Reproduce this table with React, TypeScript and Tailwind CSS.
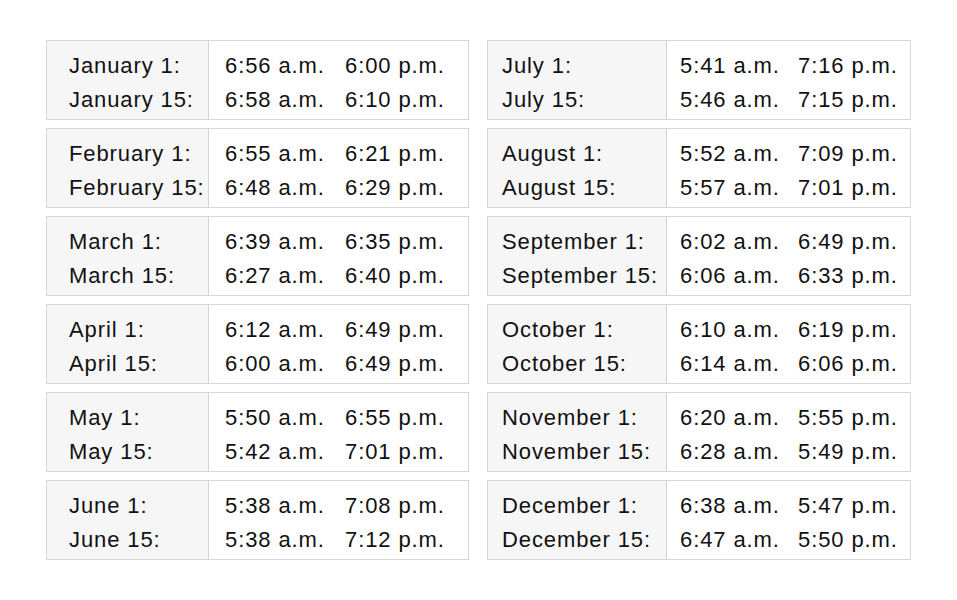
type Entry = {
  first: string;
  rows: [string, string][];
};

const left: Entry[] = [
  { first: 'January', rows: [['6:56 a.m.', '6:00 p.m.'], ['6:58 a.m.', '6:10 p.m.']] },
  { first: 'February', rows: [['6:55 a.m.', '6:21 p.m.'], ['6:48 a.m.', '6:29 p.m.']] },
  { first: 'March', rows: [['6:39 a.m.', '6:35 p.m.'], ['6:27 a.m.', '6:40 p.m.']] },
  { first: 'April', rows: [['6:12 a.m.', '6:49 p.m.'], ['6:00 a.m.', '6:49 p.m.']] },
  { first: 'May', rows: [['5:50 a.m.', '6:55 p.m.'], ['5:42 a.m.', '7:01 p.m.']] },
  { first: 'June', rows: [['5:38 a.m.', '7:08 p.m.'], ['5:38 a.m.', '7:12 p.m.']] },
];

const right: Entry[] = [
  { first: 'July', rows: [['5:41 a.m.', '7:16 p.m.'], ['5:46 a.m.', '7:15 p.m.']] },
  { first: 'August', rows: [['5:52 a.m.', '7:09 p.m.'], ['5:57 a.m.', '7:01 p.m.']] },
  { first: 'September', rows: [['6:02 a.m.', '6:49 p.m.'], ['6:06 a.m.', '6:33 p.m.']] },
  { first: 'October', rows: [['6:10 a.m.', '6:19 p.m.'], ['6:14 a.m.', '6:06 p.m.']] },
  { first: 'November', rows: [['6:20 a.m.', '5:55 p.m.'], ['6:28 a.m.', '5:49 p.m.']] },
  { first: 'December', rows: [['6:38 a.m.', '5:47 p.m.'], ['6:47 a.m.', '5:50 p.m.']] },
];

function MonthTable({ entry, side }: { entry: Entry; side: 'left' | 'right' }) {
  const isLeft = side === 'left';
  return (
    <div
      className={[
        'flex h-[80px] border border-[#d6d6d6]',
        isLeft ? 'w-[423px]' : 'w-[424px]',
      ].join(' ')}
    >
      <div
        className={[
          'flex flex-col border-r border-[#d6d6d6] bg-[#f6f6f6] pt-[8px]',
          isLeft ? 'w-[162px] pl-[22px]' : 'w-[179px] pl-[14px]',
        ].join(' ')}
      >
        <span className="whitespace-nowrap">{entry.first} 1:</span>
        <span className="whitespace-nowrap">{entry.first} 15:</span>
      </div>
      <div className={['flex flex-col pt-[8px]', isLeft ? 'pl-[16px]' : 'pl-[13px]'].join(' ')}>
        {entry.rows.map(([rise, set], i) => (
          <div key={i} className="flex whitespace-nowrap">
            <span className={isLeft ? 'w-[120px]' : 'w-[118px]'}>{rise}</span>
            <span>{set}</span>
          </div>
        ))}
      </div>
    </div>
  );
}

export default function App() {
  return (
    <div
      className="h-[600px] w-[957px] bg-white pl-[46px] pt-[40px] text-[22px] leading-[34px] tracking-[0.9px] text-[#111]"
      style={{ fontFamily: '"Liberation Sans", Arial, sans-serif' }}
    >
      <div className="flex gap-[18px]">
        <div className="flex flex-col gap-[8px]">
          {left.map((e) => (
            <MonthTable key={e.first} entry={e} side="left" />
          ))}
        </div>
        <div className="flex flex-col gap-[8px]">
          {right.map((e) => (
            <MonthTable key={e.first} entry={e} side="right" />
          ))}
        </div>
      </div>
    </div>
  );
}
